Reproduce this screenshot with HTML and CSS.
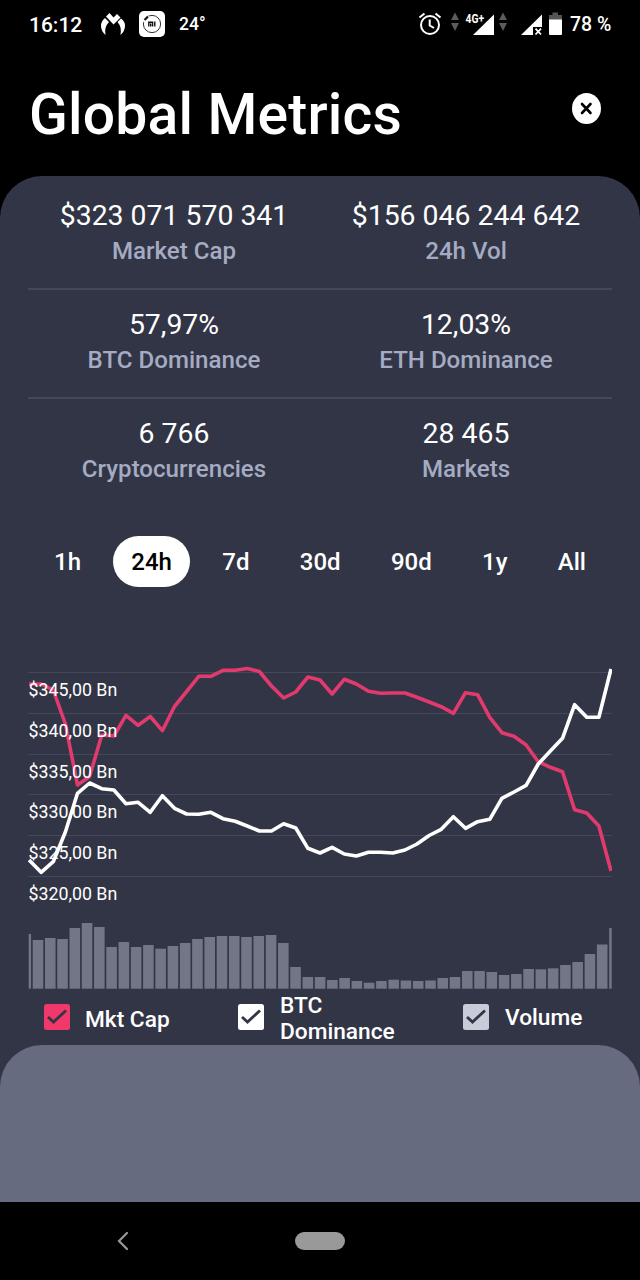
FILE: index.html
```html
<!DOCTYPE html>
<html lang="en">
<head>
    <meta charset="UTF-8">
    <title>Global Metrics</title>
    <link rel="stylesheet" href="styles.css">
</head>
<body>
    <div class="status-bar">
        <div class="status-left">
            <span class="clock">16:12</span>
            <svg class="icon-m" width="26" height="24" viewBox="0 0 26 24" fill="#fff">
                <path d="M6 4.500 L9.500 1 L13.500 5.500 L17 2 L20.500 5.500 L13.500 12.500 Z"/>
                <path d="M5 6 L9 10 Q4 15 5.500 23 Q1 19 1 14 Q1 9 5 6 Z"/>
                <path d="M21 6.500 L17.500 10 Q22 15 20.500 23 Q25 19 25 14 Q25 9 21 6.500 Z"/>
            </svg>
            <svg class="icon-mi" width="26" height="26" viewBox="0 0 26 26">
                <rect width="26" height="26" rx="5" fill="#fff"/>
                <circle cx="13" cy="13" r="8.600" fill="none" stroke="#333" stroke-width="1"/>
                <path d="M3.500 10 L9 4.500" stroke="#fff" stroke-width="5"/>
                <path d="M5.500 9 L9 5.500" stroke="#111" stroke-width="2.200"/>
                <path d="M9.800 15.500 V11.200 H13.600 V15.500 M11.700 12.500 V15.500 M15.800 10.500 V15.500" fill="none" stroke="#111" stroke-width="1.400"/>
            </svg>
            <span class="temp">24°</span>
        </div>
        <div class="status-right">
            <svg width="192" height="30" viewBox="418 9 192 30">
                <g fill="none" stroke="#fff" stroke-width="2">
                    <circle cx="430" cy="25" r="9"/>
                    <path d="M429.700 19.500 V25.500 L434 28"/>
                    <path d="M419.500 17.500 L424.500 13.500 M440.500 17.500 L435.500 13.500"/>
                </g>
                <g fill="#5c5c5c">
                    <path d="M451 20 L455 12.500 L459 20 Z M451 23 H459 L455 31 Z"/>
                    <path d="M499 20 L503 12.500 L507 20 Z M499 23 H507 L503 31 Z"/>
                </g>
                <path d="M473 35 L494 14.500 V35 Z" fill="#fff"/>
                <text class="net" x="465.500" y="22.500" textLength="18.500" lengthAdjust="spacingAndGlyphs">4G+</text>
                <path d="M521 35 L542 14.500 V27 H533 V35 Z" fill="#fff"/>
                <path d="M535.500 28.700 L541 34.500 M541 28.700 L535.500 34.500" stroke="#fff" stroke-width="1.800"/>
                <path d="M549 20 V15 H552.500 V12.500 H558 V15 H562 V20 Z" fill="#555"/>
                <path d="M549 19.500 H562 V34 Q562 35 561 35 H550 Q549 35 549 34 Z" fill="#fff"/>
            </svg>
            <span class="battery">78 %</span>
        </div>
    </div>

    <header class="header">
        <h1>Global Metrics</h1>
        <button class="close">
            <svg width="30" height="32" viewBox="0 0 30 32">
                <ellipse cx="14.500" cy="15.500" rx="14.500" ry="15.500" fill="#fff"/>
                <path d="M10 11 L18.500 20 M18.500 11 L10 20" stroke="#000" stroke-width="2.600" stroke-linecap="round"/>
            </svg>
        </button>
    </header>

    <main class="panel">
        <div class="stats">
            <div class="stat"><div class="value">$323 071 570 341</div><div class="label">Market Cap</div></div>
            <div class="stat"><div class="value">$156 046 244 642</div><div class="label">24h Vol</div></div>
            <div class="stat"><div class="value">57,97%</div><div class="label">BTC Dominance</div></div>
            <div class="stat"><div class="value">12,03%</div><div class="label">ETH Dominance</div></div>
            <div class="stat last"><div class="value">6 766</div><div class="label">Cryptocurrencies</div></div>
            <div class="stat last"><div class="value">28 465</div><div class="label">Markets</div></div>
        </div>

        <div class="tabs">
            <span class="tab">1h</span>
            <span class="tab active">24h</span>
            <span class="tab">7d</span>
            <span class="tab">30d</span>
            <span class="tab">90d</span>
            <span class="tab">1y</span>
            <span class="tab">All</span>
        </div>

        <svg class="chart" width="584" height="340" viewBox="28 650 584 340">
            <g id="grid" class="grid"></g>
            <polyline id="cap" class="line cap"/>
            <g id="labels" class="axis"></g>
            <polyline id="btc" class="line btc"/>
            <g id="bars" class="bars"></g>
        </svg>

        <div class="legend">
            <div class="legend-item">
                <svg class="check" width="26" height="26" viewBox="0 0 26 26"><rect width="26" height="26" rx="2.500" fill="#f0386b"/><path d="M4 13 L9.500 18 L22 6.500" /></svg>
                <span class="legend-cap">Mkt Cap</span>
            </div>
            <div class="legend-item">
                <svg class="check" width="26" height="26" viewBox="0 0 26 26"><rect width="26" height="26" rx="2.500" fill="#fff"/><path d="M4 13 L9.500 18 L22 6.500" /></svg>
                <span class="legend-btc">BTC<br>Dominance</span>
            </div>
            <div class="legend-item">
                <svg class="check" width="26" height="26" viewBox="0 0 26 26"><rect width="26" height="26" rx="2.500" fill="#c8cbd8"/><path d="M4 13 L9.500 18 L22 6.500" /></svg>
                <span class="legend-vol">Volume</span>
            </div>
        </div>

        <div class="sheet"></div>
    </main>

    <nav class="nav-bar">
        <svg class="back" width="12" height="20" viewBox="0 0 12 20"><path d="M10 2 L2 10 L10 18"/></svg>
        <span class="home"></span>
    </nav>

    <script src="script.js"></script>
</body>
</html>
```

FILE: styles.css
```css
body {
    margin: 0;
    width: 640px;
    height: 1280px;
    display: flex;
    flex-direction: column;
    background-color: #000;
    color: #fff;
    font-family: Roboto, sans-serif;
    font-weight: 500;
    overflow: hidden;
}

svg {
    display: block;
    flex-shrink: 0;
}

/* Status bar */
.status-bar {
    display: flex;
    justify-content: space-between;
    height: 48px;
    padding: 0 29px;
    box-sizing: border-box;
    font-size: 19.5px;
}

.status-left, .status-right {
    display: flex;
    align-items: center;
}

.clock {
    width: 71px;
    font-size: 21px;
    line-height: 50px;
    padding-top: 2px;
}

.icon-m {
    margin-right: 13px;
}

.temp {
    margin-left: 14px;
    font-size: 17.5px;
}

.battery {
    width: 41px;
    white-space: nowrap;
    line-height: 50px;
    padding-top: 2px;
}

.status-right svg {
    margin-right: -40px;
}

.net {
    font-size: 12.5px;
    font-weight: 700;
    fill: #fff;
}

/* Title */
.header {
    display: flex;
    justify-content: space-between;
    height: 128px;
    padding: 0 38px 0 29px;
    box-sizing: border-box;
}

h1 {
    margin: 0;
    padding-top: 34px;
    font-size: 57px;
    line-height: 66px;
    letter-spacing: 0.2px;
    font-weight: 500;
}

.close {
    margin-top: 45px;
    padding: 0;
    height: 32px;
    border: none;
    background: none;
}

/* Main panel */
.panel {
    display: flex;
    flex-direction: column;
    height: 1026px;
    background-color: #323545;
    border-radius: 42px 42px 0 0;
}

.stats {
    display: grid;
    grid-template-columns: 1fr 1fr;
    margin: 5px 28px 0;
}

.stat {
    height: 107px;
    text-align: center;
    border-bottom: 2px solid #444857;
}

.stat.last {
    border-bottom: none;
}

.value {
    padding-top: 18px;
    font-size: 28.4px;
    line-height: 34px;
    font-weight: 400;
}

.label {
    padding-top: 2px;
    font-size: 24.1px;
    line-height: 32px;
    color: #a4abc2;
}

/* Period tabs */
.tabs {
    display: flex;
    justify-content: space-between;
    margin: 30px 36px 0;
}

.tab {
    padding: 2px 18px 0;
    border-radius: 26px;
    font-size: 24px;
    line-height: 49px;
}

.tab.active {
    background-color: #fff;
    color: #000;
}

/* Chart */
.chart {
    margin: 63px 28px 0;
}

.grid {
    stroke: #444857;
    stroke-width: 1;
}

.line {
    fill: none;
    stroke-width: 3.6;
    stroke-linejoin: round;
    stroke-linecap: butt;
}

.cap {
    stroke: #e23a6e;
}

.btc {
    stroke: #fff;
}

.axis {
    fill: #fff;
    font-size: 17.8px;
    font-weight: 400;
}

.bars {
    fill: #727687;
}

/* Legend */
.legend {
    display: grid;
    grid-template-columns: 194px 225px auto;
    height: 55px;
    padding-left: 44px;
}

.legend-item {
    display: flex;
    align-items: center;
    gap: 16px;
    height: 53px;
    font-size: 22.7px;
    line-height: 26px;
}

.legend-cap {
    padding-top: 7px;
    margin-left: -1px;
}

.legend-btc {
    padding-top: 4px;
}

.legend-vol {
    padding-top: 3px;
}

.check path {
    fill: none;
    stroke: #323545;
    stroke-width: 2.8;
}

.sheet {
    flex: 1;
    background-color: #666b80;
    border-radius: 42px 42px 0 0;
}

/* Navigation bar */
.nav-bar {
    display: flex;
    align-items: center;
    height: 78px;
    padding-left: 117px;
}

.back path {
    fill: none;
    stroke: #999;
    stroke-width: 2.2;
    stroke-linecap: round;
}

.home {
    width: 50px;
    height: 18px;
    margin-left: 166px;
    border-radius: 9px;
    background-color: #999;
}
```

FILE: script.js
```js
const cap = [684, 684, 690, 724, 785, 776.5, 735, 736, 715.3, 725.3, 716.5, 730.7, 706.5, 691.5, 676.3, 676.3,
    670.3, 670.3, 668.5, 671.5, 686, 698, 692, 677, 680, 694, 679.3, 684, 691.3, 693.3, 693, 693,
    697.3, 702, 706.7, 713.3, 692.7, 694.7, 717.3, 732.7, 736.3, 745, 761.7, 767.3, 771.7, 809.7, 813, 826, 871];

const btc = [860, 872.3, 861.7, 832, 793.3, 783, 788.7, 790, 803.7, 802.3, 812.3, 795.7, 808.3, 814, 814.3, 812.3,
    818.7, 821.3, 826, 831, 831, 823.7, 828, 848.3, 853, 847.3, 854, 856, 852.3, 852.3, 853, 850,
    844, 835.5, 829.3, 816.7, 828.3, 821.7, 819.3, 798.3, 792, 785.3, 764, 751, 738.3, 704.7, 717.3, 717.3, 669];

// top edge of every volume bar
const volume = [934, 940, 938, 939, 928, 923, 927, 947, 942, 947, 945, 948.7, 946, 943, 939, 937, 936, 936, 937, 936,
    935, 943, 967, 977, 977, 980, 978, 981, 982.7, 981, 979.7, 980.5, 981, 980.5, 978, 977, 971, 971, 972, 975,
    974, 969, 969.3, 968.3, 965, 962, 954, 944.5, 928];

const toPoints = (values) => values.map((y, i) => `${29 + i * 12.125},${y}`).join(" ");

document.getElementById("cap").setAttribute("points", toPoints(cap));
document.getElementById("btc").setAttribute("points", toPoints(btc));

let grid = "";
let labels = "";
["$345,00 Bn", "$340,00 Bn", "$335,00 Bn", "$330,00 Bn", "$325,00 Bn", "$320,00 Bn"].forEach((text, i) => {
    const y = 672.5 + i * 40.8;
    grid += `<line x1="28.500" x2="611.500" y1="${Math.floor(y) + 0.5}" y2="${Math.floor(y) + 0.5}"/>`;
    labels += `<text x="28.500" y="${y + 23.4}">${text}</text>`;
});
document.getElementById("grid").innerHTML = grid;
document.getElementById("labels").innerHTML = labels;

// the first and last bars are cut off by the chart edges
document.getElementById("bars").innerHTML = volume.map((y, i) => {
    const left = Math.max(28.7, 32.7 + (i - 1) * 12.265);
    const right = Math.min(611.7, 32.7 + (i - 1) * 12.265 + 10.6);
    return `<rect x="${left}" y="${y}" width="${right - left}" height="${988.7 - y}"/>`;
}).join("");
```
